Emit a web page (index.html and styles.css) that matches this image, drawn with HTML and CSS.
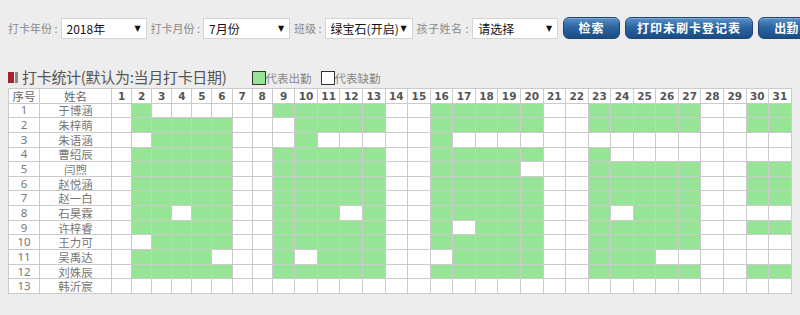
FILE: index.html
```html
<!DOCTYPE html>
<html lang="zh-CN">
<head>
<meta charset="utf-8">
<title>打卡统计</title>
<link rel="stylesheet" href="styles.css">
</head>
<body>
<div class="page">
  <div class="toolbar">
    <span class="lbl">打卡年份 :</span>
    <div class="sel w86"><span>2018年</span><i>▼</i></div>
    <span class="lbl">打卡月份 :</span>
    <div class="sel w87"><span>7月份</span><i>▼</i></div>
    <span class="lbl">班级 :</span>
    <div class="sel w88"><span>绿宝石(开启)</span><i>▼</i></div>
    <span class="lbl lbl-wide">孩子姓名 :</span>
    <div class="sel w86"><span>请选择</span><i>▼</i></div>
    <button class="btn b-search">检索</button>
    <button class="btn b-print">打印未刷卡登记表</button>
    <button class="btn b-att">出勤</button>
  </div>

  <div class="titlebar">
    <span class="mark"><b class="m1"></b><b class="m2"></b></span>
    <span class="title">打卡统计(默认为:当月打卡日期)</span>
    <span class="legend"><b class="box green"></b>代表出勤<b class="box white"></b>代表缺勤</span>
  </div>

  <table class="grid">
    <colgroup>
      <col class="c-no"><col class="c-name">
      <col class="c-s"><col class="c-s"><col class="c-s"><col class="c-s"><col class="c-s"><col class="c-s"><col class="c-s"><col class="c-s">
      <col class="c-w"><col class="c-w"><col class="c-w"><col class="c-w"><col class="c-w"><col class="c-w"><col class="c-w"><col class="c-w">
      <col class="c-w"><col class="c-w"><col class="c-w"><col class="c-w"><col class="c-w"><col class="c-w"><col class="c-w"><col class="c-w">
      <col class="c-w"><col class="c-w"><col class="c-w"><col class="c-w"><col class="c-w"><col class="c-w"><col class="c-w">
    </colgroup>
    <thead>
      <tr>
        <th class="hc">序号</th><th class="hc">姓名</th>
        <th>1</th><th>2</th><th>3</th><th>4</th><th>5</th><th>6</th><th>7</th><th>8</th><th>9</th><th>10</th>
        <th>11</th><th>12</th><th>13</th><th>14</th><th>15</th><th>16</th><th>17</th><th>18</th><th>19</th><th>20</th>
        <th>21</th><th>22</th><th>23</th><th>24</th><th>25</th><th>26</th><th>27</th><th>28</th><th>29</th><th>30</th><th>31</th>
      </tr>
    </thead>
    <tbody>
      <tr><td class="no">1</td><td class="nm">于博涵</td>
        <td></td><td class="g"></td><td></td><td></td><td></td><td></td><td></td><td></td>
        <td class="g"></td><td class="g"></td><td class="g"></td><td class="g"></td><td class="g"></td><td></td><td></td>
        <td class="g"></td><td class="g"></td><td class="g"></td><td class="g"></td><td class="g"></td><td></td><td></td>
        <td class="g"></td><td class="g"></td><td class="g"></td><td class="g"></td><td class="g"></td><td></td><td></td>
        <td class="g"></td><td class="g"></td></tr>
      <tr><td class="no">2</td><td class="nm">朱梓萌</td>
        <td></td><td class="g"></td><td class="g"></td><td class="g"></td><td class="g"></td><td class="g"></td><td></td><td></td>
        <td></td><td class="g"></td><td class="g"></td><td class="g"></td><td class="g"></td><td></td><td></td>
        <td class="g"></td><td class="g"></td><td class="g"></td><td class="g"></td><td class="g"></td><td></td><td></td>
        <td class="g"></td><td class="g"></td><td class="g"></td><td class="g"></td><td class="g"></td><td></td><td></td>
        <td class="g"></td><td class="g"></td></tr>
      <tr><td class="no">3</td><td class="nm">朱语涵</td>
        <td></td><td></td><td class="g"></td><td class="g"></td><td class="g"></td><td class="g"></td><td></td><td></td>
        <td></td><td class="g"></td><td></td><td></td><td></td><td></td><td></td>
        <td class="g"></td><td></td><td></td><td></td><td></td><td></td><td></td>
        <td></td><td></td><td></td><td></td><td></td><td></td><td></td>
        <td></td><td></td></tr>
      <tr><td class="no">4</td><td class="nm">曹绍辰</td>
        <td></td><td class="g"></td><td class="g"></td><td class="g"></td><td class="g"></td><td class="g"></td><td></td><td></td>
        <td class="g"></td><td class="g"></td><td class="g"></td><td class="g"></td><td class="g"></td><td></td><td></td>
        <td class="g"></td><td class="g"></td><td class="g"></td><td class="g"></td><td class="g"></td><td></td><td></td>
        <td class="g"></td><td></td><td></td><td></td><td></td><td></td><td></td>
        <td></td><td></td></tr>
      <tr><td class="no">5</td><td class="nm">闫煦</td>
        <td></td><td class="g"></td><td class="g"></td><td class="g"></td><td class="g"></td><td class="g"></td><td></td><td></td>
        <td class="g"></td><td class="g"></td><td class="g"></td><td class="g"></td><td class="g"></td><td></td><td></td>
        <td class="g"></td><td class="g"></td><td class="g"></td><td class="g"></td><td></td><td></td><td></td>
        <td class="g"></td><td class="g"></td><td class="g"></td><td class="g"></td><td class="g"></td><td></td><td></td>
        <td class="g"></td><td class="g"></td></tr>
      <tr><td class="no">6</td><td class="nm">赵悦涵</td>
        <td></td><td class="g"></td><td class="g"></td><td class="g"></td><td class="g"></td><td class="g"></td><td></td><td></td>
        <td class="g"></td><td class="g"></td><td class="g"></td><td class="g"></td><td class="g"></td><td></td><td></td>
        <td class="g"></td><td class="g"></td><td class="g"></td><td class="g"></td><td class="g"></td><td></td><td></td>
        <td class="g"></td><td class="g"></td><td class="g"></td><td class="g"></td><td class="g"></td><td></td><td></td>
        <td class="g"></td><td class="g"></td></tr>
      <tr><td class="no">7</td><td class="nm">赵一白</td>
        <td></td><td class="g"></td><td class="g"></td><td class="g"></td><td class="g"></td><td class="g"></td><td></td><td></td>
        <td class="g"></td><td class="g"></td><td class="g"></td><td class="g"></td><td class="g"></td><td></td><td></td>
        <td class="g"></td><td class="g"></td><td class="g"></td><td class="g"></td><td class="g"></td><td></td><td></td>
        <td class="g"></td><td class="g"></td><td class="g"></td><td class="g"></td><td class="g"></td><td></td><td></td>
        <td class="g"></td><td class="g"></td></tr>
      <tr><td class="no">8</td><td class="nm">石昊霖</td>
        <td></td><td class="g"></td><td class="g"></td><td></td><td class="g"></td><td class="g"></td><td></td><td></td>
        <td class="g"></td><td class="g"></td><td class="g"></td><td></td><td class="g"></td><td></td><td></td>
        <td class="g"></td><td class="g"></td><td class="g"></td><td class="g"></td><td class="g"></td><td></td><td></td>
        <td class="g"></td><td></td><td class="g"></td><td class="g"></td><td class="g"></td><td></td><td></td>
        <td></td><td></td></tr>
      <tr><td class="no">9</td><td class="nm">许梓睿</td>
        <td></td><td class="g"></td><td class="g"></td><td class="g"></td><td class="g"></td><td class="g"></td><td></td><td></td>
        <td class="g"></td><td class="g"></td><td class="g"></td><td class="g"></td><td class="g"></td><td></td><td></td>
        <td class="g"></td><td></td><td class="g"></td><td class="g"></td><td class="g"></td><td></td><td></td>
        <td class="g"></td><td class="g"></td><td class="g"></td><td class="g"></td><td class="g"></td><td></td><td></td>
        <td class="g"></td><td class="g"></td></tr>
      <tr><td class="no">10</td><td class="nm">王力可</td>
        <td></td><td></td><td class="g"></td><td class="g"></td><td class="g"></td><td class="g"></td><td></td><td></td>
        <td class="g"></td><td class="g"></td><td class="g"></td><td class="g"></td><td class="g"></td><td></td><td></td>
        <td class="g"></td><td class="g"></td><td class="g"></td><td class="g"></td><td class="g"></td><td></td><td></td>
        <td class="g"></td><td class="g"></td><td class="g"></td><td class="g"></td><td class="g"></td><td></td><td></td>
        <td></td><td></td></tr>
      <tr><td class="no">11</td><td class="nm">吴禹达</td>
        <td></td><td class="g"></td><td class="g"></td><td class="g"></td><td class="g"></td><td></td><td></td><td></td>
        <td class="g"></td><td></td><td class="g"></td><td class="g"></td><td class="g"></td><td></td><td></td>
        <td></td><td class="g"></td><td class="g"></td><td class="g"></td><td class="g"></td><td></td><td></td>
        <td class="g"></td><td class="g"></td><td class="g"></td><td></td><td></td><td></td><td></td>
        <td></td><td></td></tr>
      <tr><td class="no">12</td><td class="nm">刘姝辰</td>
        <td></td><td class="g"></td><td class="g"></td><td class="g"></td><td class="g"></td><td class="g"></td><td></td><td></td>
        <td class="g"></td><td class="g"></td><td class="g"></td><td class="g"></td><td class="g"></td><td></td><td></td>
        <td class="g"></td><td class="g"></td><td class="g"></td><td class="g"></td><td class="g"></td><td></td><td></td>
        <td class="g"></td><td class="g"></td><td class="g"></td><td class="g"></td><td class="g"></td><td></td><td></td>
        <td class="g"></td><td class="g"></td></tr>
      <tr><td class="no">13</td><td class="nm">韩沂宸</td>
        <td></td><td></td><td></td><td></td><td></td><td></td><td></td><td></td>
        <td></td><td></td><td></td><td></td><td></td><td></td><td></td>
        <td></td><td></td><td></td><td></td><td></td><td></td><td></td>
        <td></td><td></td><td></td><td></td><td></td><td></td><td></td>
        <td></td><td></td></tr>
    </tbody>
  </table>
</div>
</body>
</html>
```
FILE: styles.css
```css
* { box-sizing: border-box; }
html, body {
  margin: 0;
  padding: 0;
  background: #ededed;
  overflow: hidden;
}
body {
  font-family: "Noto Sans CJK SC", "Noto Sans", sans-serif;
  color: #666;
}
.page {
  padding: 17px 0 0 8px;
  width: 800px;
}

/* toolbar */
.toolbar {
  display: flex;
  align-items: center;
  height: 22px;
  white-space: nowrap;
}
.toolbar > * { flex: none; }
.lbl {
  font-size: 11px;
  color: #8a8a8a;
  line-height: 20px;
  margin-right: 3px;
}
.lbl-wide { letter-spacing: 0.5px; }
.sel {
  display: flex;
  align-items: center;
  justify-content: space-between;
  height: 21px;
  background: #fff;
  border: 1px solid #d4d4d4;
  padding: 0 5px 0 5px;
  margin-right: 4px;
  font-size: 12px;
  color: #111;
}
.sel span { line-height: 19px; }
.sel i {
  font-style: normal;
  font-size: 8px;
  color: #111;
  font-family: "DejaVu Sans", sans-serif;
}
.w86 { width: 86px; }
.w87 { width: 87px; }
.w88 { width: 88px; }

.btn {
  height: 22px;
  border: 1px solid #1f4572;
  border-radius: 6px;
  background: linear-gradient(#5a91c8 0%, #2c65a0 45%, #1b4c84 100%);
  box-shadow: inset 0 1px 0 rgba(255,255,255,0.25);
  color: #fff;
  font-family: "Noto Sans CJK SC", sans-serif;
  font-weight: bold;
  font-size: 12px;
  letter-spacing: 1px;
  padding: 0;
  margin-left: 1px;
  margin-right: 4px;
  line-height: 20px;
}
.b-search { width: 57px; }
.b-print { width: 128px; }
.b-att { width: 70px; text-align: left; padding-left: 15px; letter-spacing: 0; }

/* title */
.titlebar {
  display: flex;
  align-items: center;
  height: 18px;
  margin-top: 29px;
  white-space: nowrap;
}
.mark { display: flex; align-items: center; margin-right: 4px; }
.mark b { display: block; height: 11px; }
.m1 { width: 6px; background: #a3242b; }
.m2 { width: 3px; background: #8a8a8a; margin-left: 1px; }
.title {
  font-size: 15px;
  color: #555;
  line-height: 18px;
  letter-spacing: -0.3px;
}
.legend {
  display: flex;
  align-items: center;
  font-size: 11.5px;
  color: #888;
  margin-left: 25px;
  margin-top: 2px;
}
.box {
  display: block;
  width: 14px;
  height: 14px;
  border: 1px solid #333;
}
.box.green { background: #96e496; }
.box.white { background: #fff; margin-left: 9px; }

/* table */
.grid {
  margin-top: 2px;
  border-collapse: collapse;
  table-layout: fixed;
  width: 783px;
  background: #fff;
}
.c-no { width: 31px; }
.c-name { width: 72px; }
.c-s { width: 20.1px; }
.c-w { width: 22.57px; }
.grid tr { height: 14.65px; }
.grid th, .grid td {
  border: 1px solid #cbcbcb;
  padding: 0;
  text-align: center;
  line-height: 12px;
  overflow: hidden;
  white-space: nowrap;
}
.grid th {
  font-family: "DejaVu Sans", "Noto Sans CJK SC", sans-serif;
  font-weight: bold;
  font-size: 10.5px;
  color: #555;
}
.grid th.hc {
  font-family: "Noto Sans CJK SC", sans-serif;
  font-weight: normal;
  font-size: 11.5px;
  color: #666;
}
.grid td { font-size: 11.5px; color: #777; }
.grid td.no { font-family: "Noto Sans", "Noto Sans CJK SC", sans-serif; }
.grid td.nm { font-family: "Noto Sans CJK SC", sans-serif; }
.grid td.g { background: #96e496; }
```
